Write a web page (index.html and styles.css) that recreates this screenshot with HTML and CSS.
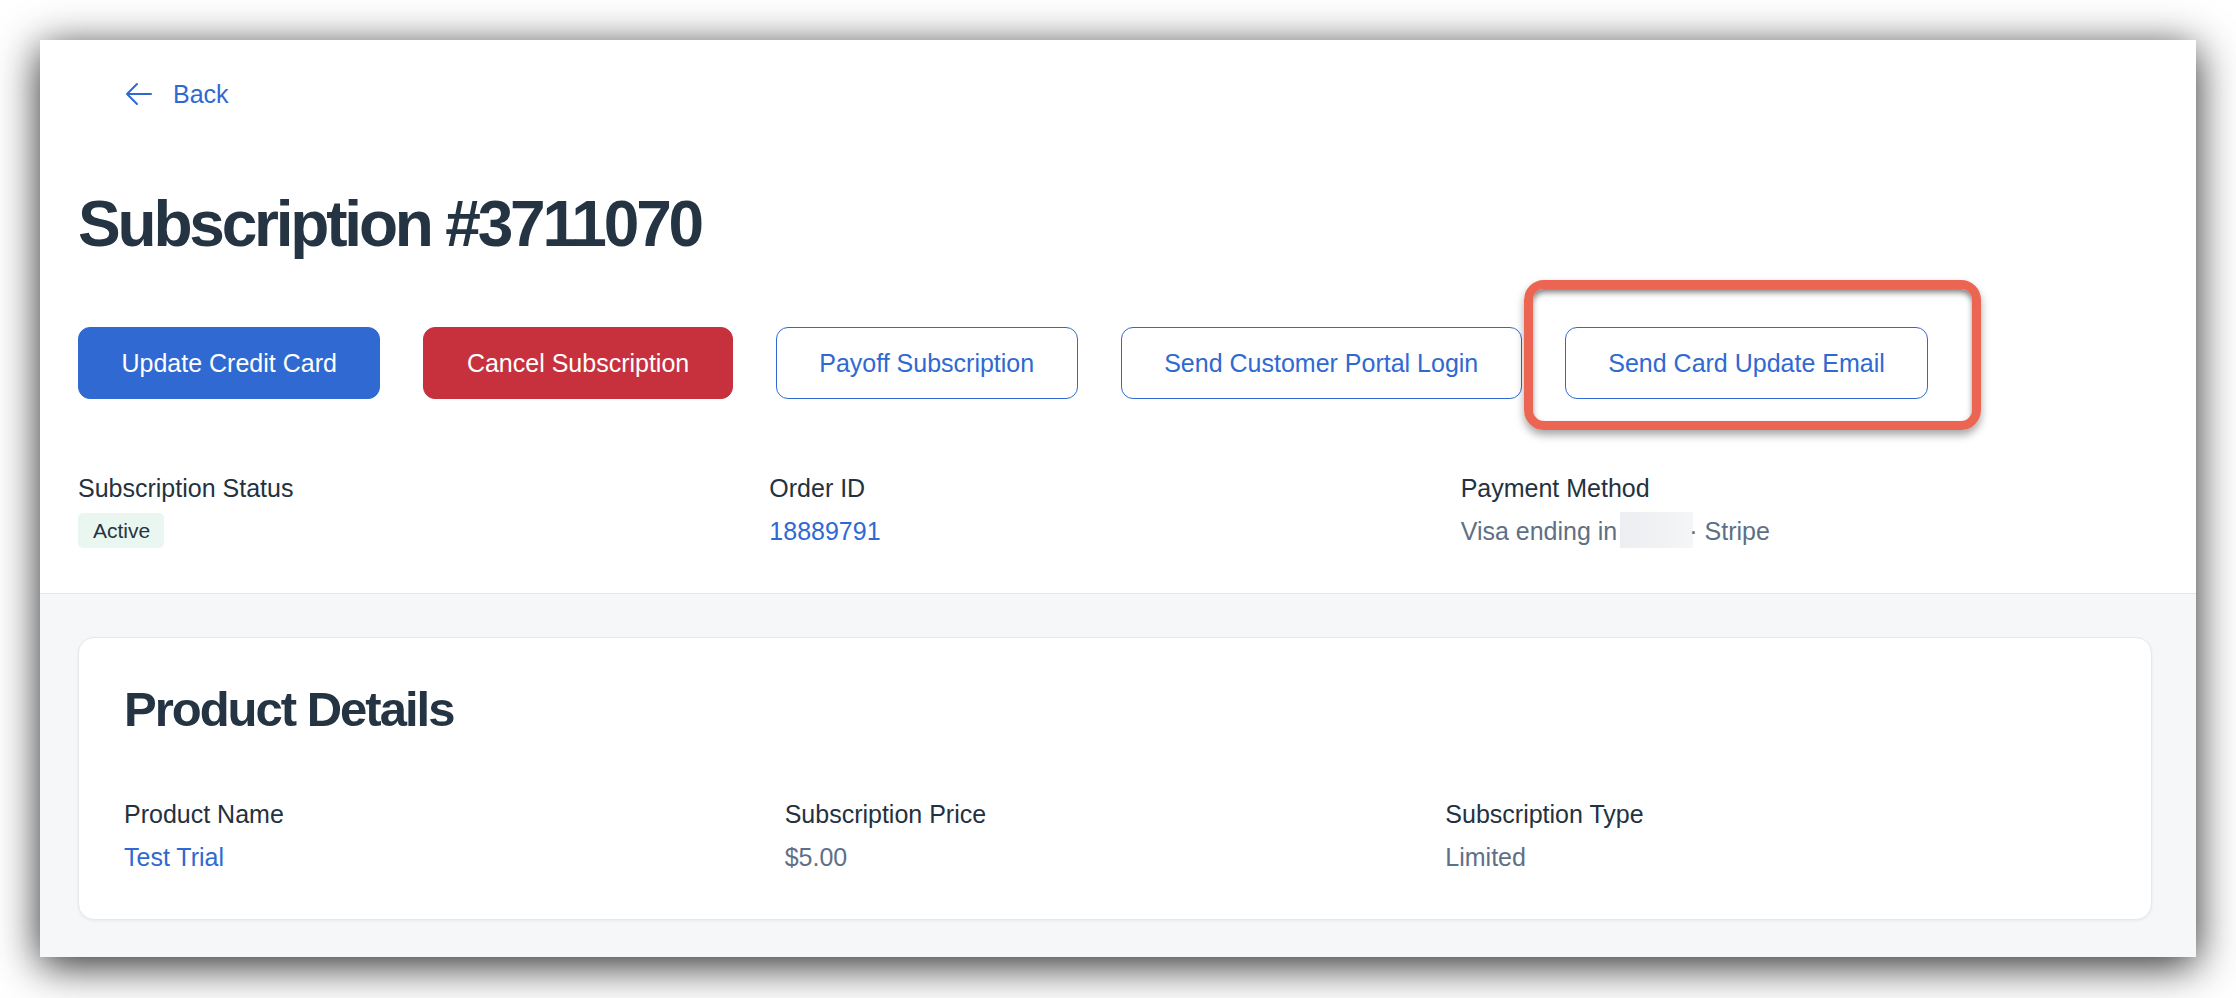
FILE: index.html
```html
<!DOCTYPE html>
<html lang="en">
<head>
<meta charset="utf-8">
<title>Subscription #3711070</title>
<link rel="stylesheet" href="styles.css">
</head>
<body>
<div class="window">
  <header class="top">
    <a class="back" href="#">
      <svg class="back-icon" viewBox="0 0 24 24" fill="none" stroke="currentColor" stroke-width="1.5" stroke-linecap="round" stroke-linejoin="round"><path d="M10.5 19.5 3 12m0 0 7.5-7.5M3 12h18"/></svg>
      <span>Back</span>
    </a>
    <h1 class="title">Subscription #3711070</h1>
    <div class="actions">
      <button class="btn btn-primary">Update Credit Card</button>
      <button class="btn btn-danger">Cancel Subscription</button>
      <button class="btn btn-outline">Payoff Subscription</button>
      <button class="btn btn-outline">Send Customer Portal Login</button>
      <button class="btn btn-outline">Send Card Update Email</button>
    </div>
    <div class="fields">
      <div class="field">
        <div class="label">Subscription Status</div>
        <span class="badge">Active</span>
      </div>
      <div class="field">
        <div class="label">Order ID</div>
        <a class="value link" href="#">18889791</a>
      </div>
      <div class="field">
        <div class="label">Payment Method</div>
        <div class="value muted">Visa ending in<span class="redacted"></span>· Stripe</div>
      </div>
    </div>
  </header>
  <main class="content">
    <section class="card">
      <h2 class="card-title">Product Details</h2>
      <div class="fields card-fields">
        <div class="field">
          <div class="label">Product Name</div>
          <a class="value link" href="#">Test Trial</a>
        </div>
        <div class="field">
          <div class="label">Subscription Price</div>
          <div class="value muted">$5.00</div>
        </div>
        <div class="field">
          <div class="label">Subscription Type</div>
          <div class="value muted">Limited</div>
        </div>
      </div>
    </section>
  </main>
  <div class="highlight"></div>
</div>
</body>
</html>
```
FILE: styles.css
```css
* { box-sizing: border-box; }

html, body {
  margin: 0;
  padding: 0;
  background: #ffffff;
  height: 998px;
  overflow: hidden;
}

body {
  font-family: "Liberation Sans", Arial, Helvetica, sans-serif;
  color: #253443;
}

.window {
  position: relative;
  width: 2156px;
  height: 917px;
  margin: 40px 0 0 40px;
  background: #f6f7f9;
  box-shadow: 0 8px 40px rgba(0, 0, 0, 0.85);
}

.top {
  background: #ffffff;
  padding: 39px 44px 45px 38px;
  border-bottom: 1px solid #e3e6ea;
}

.back {
  display: flex;
  align-items: center;
  gap: 18px;
  height: 30px;
  margin-left: 45px;
  color: #2f69d1;
  font-size: 25px;
  line-height: 30px;
  text-decoration: none;
  width: max-content;
}

.back-icon {
  width: 32px;
  height: 32px;
  margin: -1px 0;
  flex: none;
}

.title {
  margin: 77px 0 0;
  font-size: 64px;
  line-height: 77px;
  font-weight: 700;
  letter-spacing: -3.2px;
  color: #253443;
}

.actions {
  display: flex;
  gap: 43px;
  margin-top: 64px;
}

.btn {
  font-family: inherit;
  font-size: 25px;
  line-height: 30px;
  padding: 20px 42.5px;
  border: 1px solid transparent;
  border-radius: 12px;
  background: #ffffff;
  cursor: pointer;
  white-space: nowrap;
}

.btn-primary {
  background: #2f69d1;
  border-color: #2f69d1;
  color: #ffffff;
}

.btn-danger {
  background: #c7313e;
  border-color: #c7313e;
  color: #ffffff;
}

.btn-outline {
  background: #ffffff;
  border-color: #2f69d1;
  color: #2f69d1;
}

.fields {
  display: grid;
  grid-template-columns: repeat(3, 1fr);
  margin-top: 74px;
}

.field {
  display: flex;
  flex-direction: column;
  align-items: flex-start;
  gap: 13px;
  font-size: 25px;
  line-height: 30px;
}

.label {
  color: #243240;
}

.value {
  display: block;
}

.link {
  color: #2f69d1;
  text-decoration: none;
}

.muted {
  color: #5e7085;
}

.badge {
  display: inline-block;
  margin-top: -3px;
  height: 35px;
  padding: 5px 14px 5px 15px;
  font-size: 21px;
  line-height: 25px;
  background: #eaf7f1;
  color: #253443;
  border-radius: 5px;
}

.redacted {
  display: inline-block;
  width: 73px;
  height: 36px;
  margin: -4px -4px -4px 3px;
  vertical-align: -4px;
  background: linear-gradient(90deg, #eceef1 0%, #f1f2f4 60%, #f5f6f8 100%);
}

.content {
  padding: 43px 44px 37px 38px;
}

.card {
  background: #ffffff;
  border: 1px solid #e6e8eb;
  border-radius: 16px;
  padding: 42px 45px 47px;
  box-shadow: 0 1px 3px rgba(0, 0, 0, 0.06);
}

.card-title {
  margin: 0;
  font-size: 49px;
  line-height: 59px;
  font-weight: 700;
  letter-spacing: -2px;
  color: #253443;
}

.card-fields {
  margin-top: 60px;
}

.highlight {
  position: absolute;
  left: 1484px;
  top: 240px;
  width: 457px;
  height: 150px;
  border: 9px solid #ec6553;
  border-radius: 20px;
  box-shadow: inset 0 4px 6px -1px rgba(0, 0, 0, 0.55), 0 5px 8px rgba(0, 0, 0, 0.35);
  pointer-events: none;
}
```
